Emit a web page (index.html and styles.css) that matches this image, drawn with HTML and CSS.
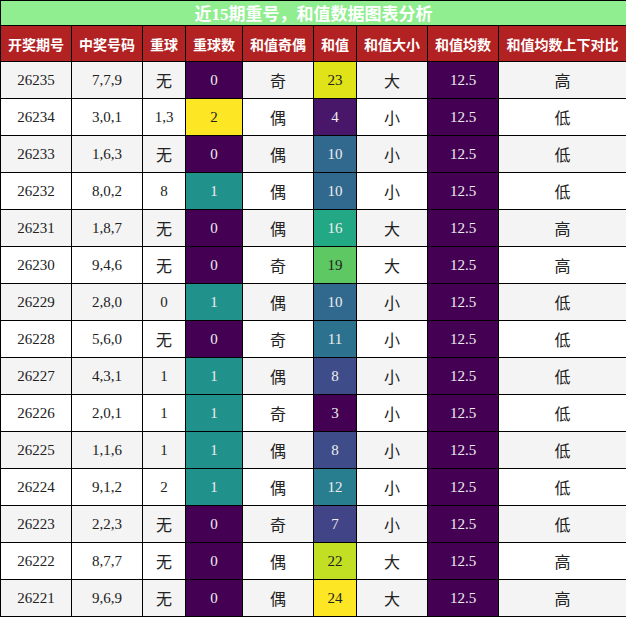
FILE: index.html
```html
<!DOCTYPE html>
<html lang="zh">
<head>
<meta charset="utf-8">
<title>近15期重号，和值数据图表分析</title>
<link rel="stylesheet" href="styles.css">
</head>
<body>
<table class="grid">
  <colgroup>
    <col class="c-issue"><col class="c-code"><col class="c-rep"><col class="c-repn"><col class="c-oe"><col class="c-sum"><col class="c-bs"><col class="c-avg"><col class="c-cmp">
  </colgroup>
  <tr class="title-row"><td colspan="9" class="title">近15期重号，和值数据图表分析</td></tr>
  <tr class="head-row">
    <th>开奖期号</th><th>中奖号码</th><th>重球</th><th>重球数</th><th>和值奇偶</th><th>和值</th><th>和值大小</th><th>和值均数</th><th>和值均数上下对比</th>
  </tr>
  <tr class="odd"><td>26235</td><td>7,7,9</td><td class="cjk">无</td><td class="v0 lt">0</td><td class="cjk">奇</td><td class="s23">23</td><td class="cjk">大</td><td class="v0 lt">12.5</td><td class="cjk">高</td></tr>
  <tr class="even"><td>26234</td><td>3,0,1</td><td>1,3</td><td class="v2">2</td><td class="cjk">偶</td><td class="s4 lt">4</td><td class="cjk">小</td><td class="v0 lt">12.5</td><td class="cjk">低</td></tr>
  <tr class="odd"><td>26233</td><td>1,6,3</td><td class="cjk">无</td><td class="v0 lt">0</td><td class="cjk">偶</td><td class="s10 lt">10</td><td class="cjk">小</td><td class="v0 lt">12.5</td><td class="cjk">低</td></tr>
  <tr class="even"><td>26232</td><td>8,0,2</td><td>8</td><td class="v1 lt">1</td><td class="cjk">偶</td><td class="s10 lt">10</td><td class="cjk">小</td><td class="v0 lt">12.5</td><td class="cjk">低</td></tr>
  <tr class="odd"><td>26231</td><td>1,8,7</td><td class="cjk">无</td><td class="v0 lt">0</td><td class="cjk">偶</td><td class="s16 lt">16</td><td class="cjk">大</td><td class="v0 lt">12.5</td><td class="cjk">高</td></tr>
  <tr class="even"><td>26230</td><td>9,4,6</td><td class="cjk">无</td><td class="v0 lt">0</td><td class="cjk">奇</td><td class="s19">19</td><td class="cjk">大</td><td class="v0 lt">12.5</td><td class="cjk">高</td></tr>
  <tr class="odd"><td>26229</td><td>2,8,0</td><td>0</td><td class="v1 lt">1</td><td class="cjk">偶</td><td class="s10 lt">10</td><td class="cjk">小</td><td class="v0 lt">12.5</td><td class="cjk">低</td></tr>
  <tr class="even"><td>26228</td><td>5,6,0</td><td class="cjk">无</td><td class="v0 lt">0</td><td class="cjk">奇</td><td class="s11 lt">11</td><td class="cjk">小</td><td class="v0 lt">12.5</td><td class="cjk">低</td></tr>
  <tr class="odd"><td>26227</td><td>4,3,1</td><td>1</td><td class="v1 lt">1</td><td class="cjk">偶</td><td class="s8 lt">8</td><td class="cjk">小</td><td class="v0 lt">12.5</td><td class="cjk">低</td></tr>
  <tr class="even"><td>26226</td><td>2,0,1</td><td>1</td><td class="v1 lt">1</td><td class="cjk">奇</td><td class="s3 lt">3</td><td class="cjk">小</td><td class="v0 lt">12.5</td><td class="cjk">低</td></tr>
  <tr class="odd"><td>26225</td><td>1,1,6</td><td>1</td><td class="v1 lt">1</td><td class="cjk">偶</td><td class="s8 lt">8</td><td class="cjk">小</td><td class="v0 lt">12.5</td><td class="cjk">低</td></tr>
  <tr class="even"><td>26224</td><td>9,1,2</td><td>2</td><td class="v1 lt">1</td><td class="cjk">偶</td><td class="s12 lt">12</td><td class="cjk">小</td><td class="v0 lt">12.5</td><td class="cjk">低</td></tr>
  <tr class="odd"><td>26223</td><td>2,2,3</td><td class="cjk">无</td><td class="v0 lt">0</td><td class="cjk">奇</td><td class="s7 lt">7</td><td class="cjk">小</td><td class="v0 lt">12.5</td><td class="cjk">低</td></tr>
  <tr class="even"><td>26222</td><td>8,7,7</td><td class="cjk">无</td><td class="v0 lt">0</td><td class="cjk">偶</td><td class="s22">22</td><td class="cjk">大</td><td class="v0 lt">12.5</td><td class="cjk">高</td></tr>
  <tr class="odd"><td>26221</td><td>9,6,9</td><td class="cjk">无</td><td class="v0 lt">0</td><td class="cjk">偶</td><td class="s24">24</td><td class="cjk">大</td><td class="v0 lt">12.5</td><td class="cjk">高</td></tr>
</table>
</body>
</html>
```
FILE: styles.css
```css
html, body {
  margin: 0;
  padding: 0;
  background: #ffffff;
}
.grid {
  border-collapse: collapse;
  width: 626px;
  table-layout: fixed;
  font-family: "Liberation Serif", "Noto Sans CJK SC", serif;
  font-size: 15px;
  color: #222;
}
.c-issue { width: 71px; }
.c-code { width: 71px; }
.c-rep { width: 43px; }
.c-repn { width: 57px; }
.c-oe { width: 71px; }
.c-sum { width: 43px; }
.c-bs { width: 71px; }
.c-avg { width: 71px; }
.c-cmp { width: 128px; }
.grid td, .grid th {
  border: 1px solid #000;
  text-align: center;
  padding: 0;
  vertical-align: middle;
}
.title-row { height: 25px; }
.grid td.title {
  background: #90ee90;
  color: #fff;
  font-weight: bold;
  font-size: 17px;
  line-height: 20px;
  padding-top: 3px;
}
.head-row { height: 36px; }
.head-row th {
  background: #b22222;
  color: #fff;
  font-family: "Noto Sans CJK SC", sans-serif;
  font-weight: bold;
  font-size: 14px;
}
.odd, .even { height: 37px; }
.odd td { background: #f4f4f4; }
.even td { background: #ffffff; }
.cjk {
  font-family: "Noto Sans CJK SC", sans-serif;
  font-size: 16px;
}
.grid td.lt { color: #eeeeee; }
.grid td.v0 { background: #440154; }
.grid td.v1 { background: #21918c; }
.grid td.v2 { background: #fde725; }
.grid td.s3 { background: #440154; }
.grid td.s4 { background: #481769; }
.grid td.s7 { background: #414487; }
.grid td.s8 { background: #3e4c8a; }
.grid td.s10 { background: #31688e; }
.grid td.s11 { background: #2c728e; }
.grid td.s12 { background: #287d8e; }
.grid td.s16 { background: #22a884; }
.grid td.s19 { background: #5ec962; }
.grid td.s22 { background: #c2df23; }
.grid td.s23 { background: #dfe318; }
.grid td.s24 { background: #fde725; }
```
